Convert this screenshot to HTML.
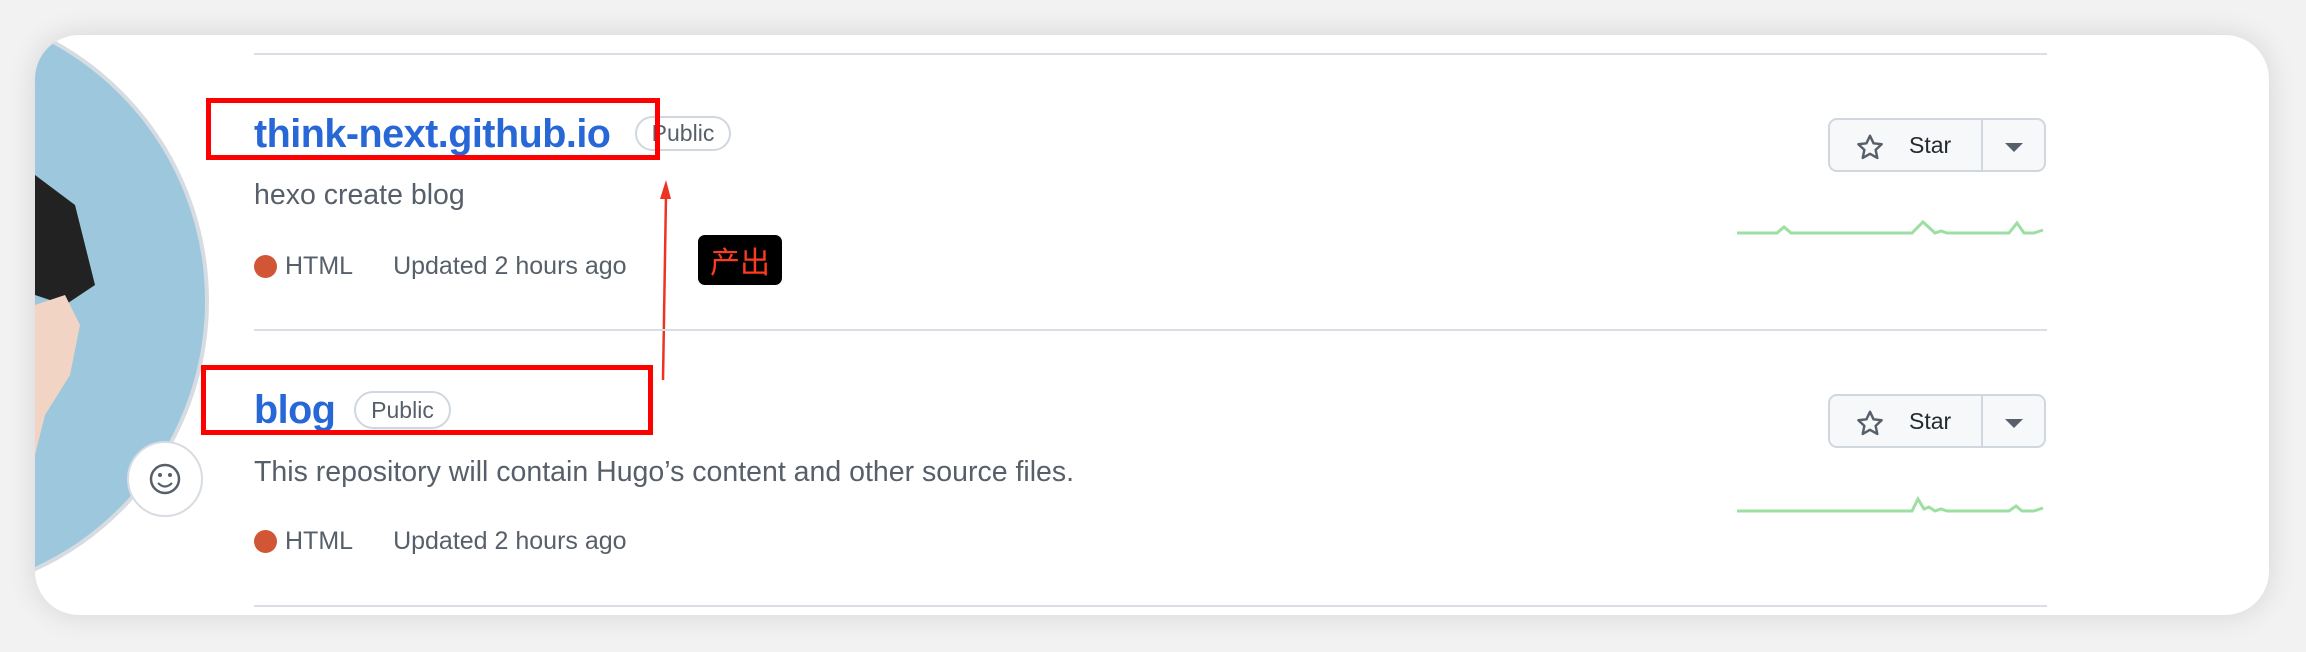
<!DOCTYPE html>
<html><head><meta charset="utf-8"><style>
*{margin:0;padding:0;box-sizing:border-box}
body{width:2306px;height:652px;background:#f2f2f2;position:relative;overflow:hidden;font-family:"Liberation Sans","Noto Sans CJK SC",sans-serif}
.card{position:absolute;left:35px;top:35px;width:2234px;height:580px;background:#fff;border-radius:44px;overflow:hidden;box-shadow:0 0 30px rgba(0,0,0,.12)}
.a{position:absolute}
.sep{position:absolute;left:219px;width:1793px;height:2px;background:#d8dee4}
.title{position:absolute;left:219px;font-size:39.5px;font-weight:bold;color:#2767d6;letter-spacing:-0.5px}
.badge{position:absolute;border:2px solid #d0d7de;border-radius:20px;font-size:23px;color:#57606a;text-align:center}
.desc{position:absolute;left:219px;font-size:28.5px;color:#57606a}
.meta{position:absolute;left:219px;font-size:25px;color:#57606a}
.dot{display:inline-block;width:23px;height:23px;border-radius:50%;background:#d05635;vertical-align:-4px;margin-right:8px}
.red{position:absolute;border:5px solid #f00}
.btn{position:absolute;left:1793px;width:218px;height:54px;border:2px solid #d0d7de;border-radius:9px;background:#f6f8fa}
.btn .div{position:absolute;left:151px;top:0;width:2px;height:100%;background:#d0d7de}
.btn .t{position:absolute;left:79px;top:12px;font-size:23px;color:#24292f}
.btn svg.s{position:absolute;left:25px;top:13px}
.btn .car{position:absolute;left:175px;top:23px;border-left:9px solid transparent;border-right:9px solid transparent;border-top:9px solid #57606a}
</style></head><body>
<div class="card">
  <svg class="a" style="left:0;top:0" width="260" height="580">
    <circle cx="-123" cy="266" r="295" fill="#9dc7dd" stroke="#d6dce2" stroke-width="4"/>
    <path d="M0 140 L40 170 L60 250 L30 270 L0 260Z" fill="#222"/>
    <path d="M0 270 L30 260 L45 290 L35 340 L10 380 L0 420Z" fill="#f2d4c4"/>
    <circle cx="130" cy="444" r="37" fill="#fff" stroke="#d6dce2" stroke-width="2"/>
    <circle cx="130" cy="444" r="14" fill="none" stroke="#57606a" stroke-width="2.5"/>
    <circle cx="125" cy="440" r="2" fill="#57606a"/><circle cx="135" cy="440" r="2" fill="#57606a"/>
    <path d="M123 448 Q130 455 137 448" fill="none" stroke="#57606a" stroke-width="2.2"/>
  </svg>
  <div class="sep" style="top:18px"></div>
  <div class="title" style="top:77px">think-next.github.io</div>
  <div class="badge" style="left:600px;top:81px;width:96px;height:35px;line-height:31px">Public</div>
  <div class="red" style="left:171px;top:63px;width:454px;height:62px"></div>
  <div class="desc" style="top:144px">hexo create blog</div>
  <div class="meta" style="top:217px"><span class="dot"></span>HTML<span style="margin-left:40px">Updated 2 hours ago</span></div>
  <div class="a" style="left:663px;top:200px;width:84px;height:50px;background:#000;border-radius:7px;color:#ff3b1f;font-size:30px;line-height:50px;text-align:center;font-family:'Noto Sans CJK SC',sans-serif">产出</div>
  <svg class="a" style="left:610px;top:140px" width="40" height="210"><path d="M18 205 L21 20" stroke="#ee3322" stroke-width="2.5"/><path d="M15 24 L21 5 L26 24Z" fill="#ee3322"/></svg>
  <div class="sep" style="top:294px"></div>
  <div class="title" style="top:353px">blog</div>
  <div class="badge" style="left:319px;top:356px;width:97px;height:38px;line-height:34px">Public</div>
  <div class="red" style="left:166px;top:330px;width:452px;height:70px"></div>
  <div class="desc" style="top:421px">This repository will contain Hugo’s content and other source files.</div>
  <div class="meta" style="top:492px"><span class="dot"></span>HTML<span style="margin-left:40px">Updated 2 hours ago</span></div>
  <div class="sep" style="top:570px"></div>
  <div class="btn" style="top:83px"><svg class="s" width="30" height="30" viewBox="0 0 16 16"><path d="M8 1.5l1.9 4 4.3.5-3.2 3 .9 4.3L8 11.1l-3.9 2.2.9-4.3-3.2-3 4.3-.5z" fill="none" stroke="#57606a" stroke-width="1.3" stroke-linejoin="round"/></svg><span class="t">Star</span><div class="div"></div><div class="car"></div></div>
  <div class="btn" style="top:359px"><svg class="s" width="30" height="30" viewBox="0 0 16 16"><path d="M8 1.5l1.9 4 4.3.5-3.2 3 .9 4.3L8 11.1l-3.9 2.2.9-4.3-3.2-3 4.3-.5z" fill="none" stroke="#57606a" stroke-width="1.3" stroke-linejoin="round"/></svg><span class="t">Star</span><div class="div"></div><div class="car"></div></div>
  <svg class="a" style="left:1702px;top:173px" width="310" height="40"><path d="M0 25 L40 25 L47 19 L54 25 L175 25 L186 14 L198 25 L204 23 L210 25 L272 25 L280 15 L287 25 L297 25 L306 22" fill="none" stroke="#9be0a0" stroke-width="3"/></svg>
  <svg class="a" style="left:1702px;top:449px" width="310" height="40"><path d="M0 27 L175 27 L181 15 L187 25 L192 23 L198 27 L204 25 L210 27 L272 27 L279 22 L285 27 L297 27 L306 24" fill="none" stroke="#9be0a0" stroke-width="3"/></svg>
</div>
</body></html>
